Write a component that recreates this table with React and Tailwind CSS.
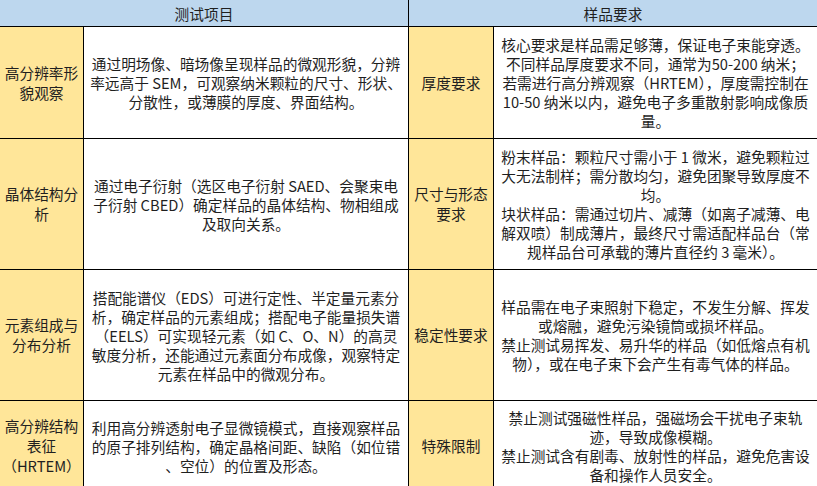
import React from 'react'

const rows = [
  {
    item: ['高分辨率形', '貌观察'],
    desc: [
      '通过明场像、暗场像呈现样品的微观形貌，分辨',
      '率远高于 SEM，可观察纳米颗粒的尺寸、形状、',
      '分散性，或薄膜的厚度、界面结构。',
    ],
    req: ['厚度要求'],
    detail: [
      '核心要求是样品需足够薄，保证电子束能穿透。',
      '不同样品厚度要求不同，通常为50-200 纳米；',
      '若需进行高分辨观察（HRTEM），厚度需控制在',
      '10-50 纳米以内，避免电子多重散射影响成像质',
      '量。',
    ],
    h: 'h-[111px]',
  },
  {
    item: ['晶体结构分', '析'],
    desc: [
      '通过电子衍射（选区电子衍射 SAED、会聚束电',
      '子衍射 CBED）确定样品的晶体结构、物相组成',
      '及取向关系。',
    ],
    req: ['尺寸与形态', '要求'],
    detail: [
      '粉末样品：颗粒尺寸需小于 1 微米，避免颗粒过',
      '大无法制样；需分散均匀，避免团聚导致厚度不',
      '均。',
      '块状样品：需通过切片、减薄（如离子减薄、电',
      '解双喷）制成薄片，最终尺寸需适配样品台（常',
      '规样品台可承载的薄片直径约 3 毫米）。',
    ],
    h: 'h-[130px]',
  },
  {
    item: ['元素组成与', '分布分析'],
    desc: [
      '搭配能谱仪（EDS）可进行定性、半定量元素分',
      '析，确定样品的元素组成；搭配电子能量损失谱',
      '（EELS）可实现轻元素（如 C、O、N）的高灵',
      '敏度分析，还能通过元素面分布成像，观察特定',
      '元素在样品中的微观分布。',
    ],
    req: ['稳定性要求'],
    detail: [
      '样品需在电子束照射下稳定，不发生分解、挥发',
      '或熔融，避免污染镜筒或损坏样品。',
      '禁止测试易挥发、易升华的样品（如低熔点有机',
      '物），或在电子束下会产生有毒气体的样品。',
    ],
    h: 'h-[130px]',
  },
  {
    item: ['高分辨结构', '表征', '（HRTEM）'],
    desc: [
      '利用高分辨透射电子显微镜模式，直接观察样品',
      '的原子排列结构，确定晶格间距、缺陷（如位错',
      '、空位）的位置及形态。',
    ],
    req: ['特殊限制'],
    detail: [
      '禁止测试强磁性样品，强磁场会干扰电子束轨',
      '迹，导致成像模糊。',
      '禁止测试含有剧毒、放射性的样品，避免危害设',
      '备和操作人员安全。',
    ],
    h: 'h-[90px]',
  },
]

const Lines = ({ lines }) => (
  <div className="flex flex-col items-center">
    {lines.map((l, i) => (
      <span key={i} className="whitespace-nowrap">{l}</span>
    ))}
  </div>
)

const App = () => {
  return (
    <div className="w-[817px] h-[486px] overflow-hidden bg-white">
      <div
        className="grid grid-cols-[83px_324px_84px_323px] gap-px bg-black text-[14.7px] leading-[19px] text-[#1f1f1f]"
        style={{ fontFamily: '"Noto Sans CJK SC", "Noto Sans", sans-serif' }}
      >
        <div className="col-span-2 h-[26px] bg-[#bdd7ee] flex items-center justify-center">测试项目</div>
        <div className="col-span-2 h-[26px] bg-[#bdd7ee] flex items-center justify-center">样品要求</div>

        {rows.map((r, i) => (
          <React.Fragment key={i}>
            <div className={`${r.h} bg-[#ffe699] flex items-center justify-center leading-[20px]`}>
              <Lines lines={r.item} />
            </div>
            <div className={`${r.h} bg-white flex items-center justify-center`}>
              <Lines lines={r.desc} />
            </div>
            <div className={`${r.h} bg-[#ffe699] flex items-center justify-center leading-[20px]`}>
              <Lines lines={r.req} />
            </div>
            <div className={`${r.h} bg-white flex items-center justify-center`}>
              <Lines lines={r.detail} />
            </div>
          </React.Fragment>
        ))}
      </div>
    </div>
  )
}

export default App
